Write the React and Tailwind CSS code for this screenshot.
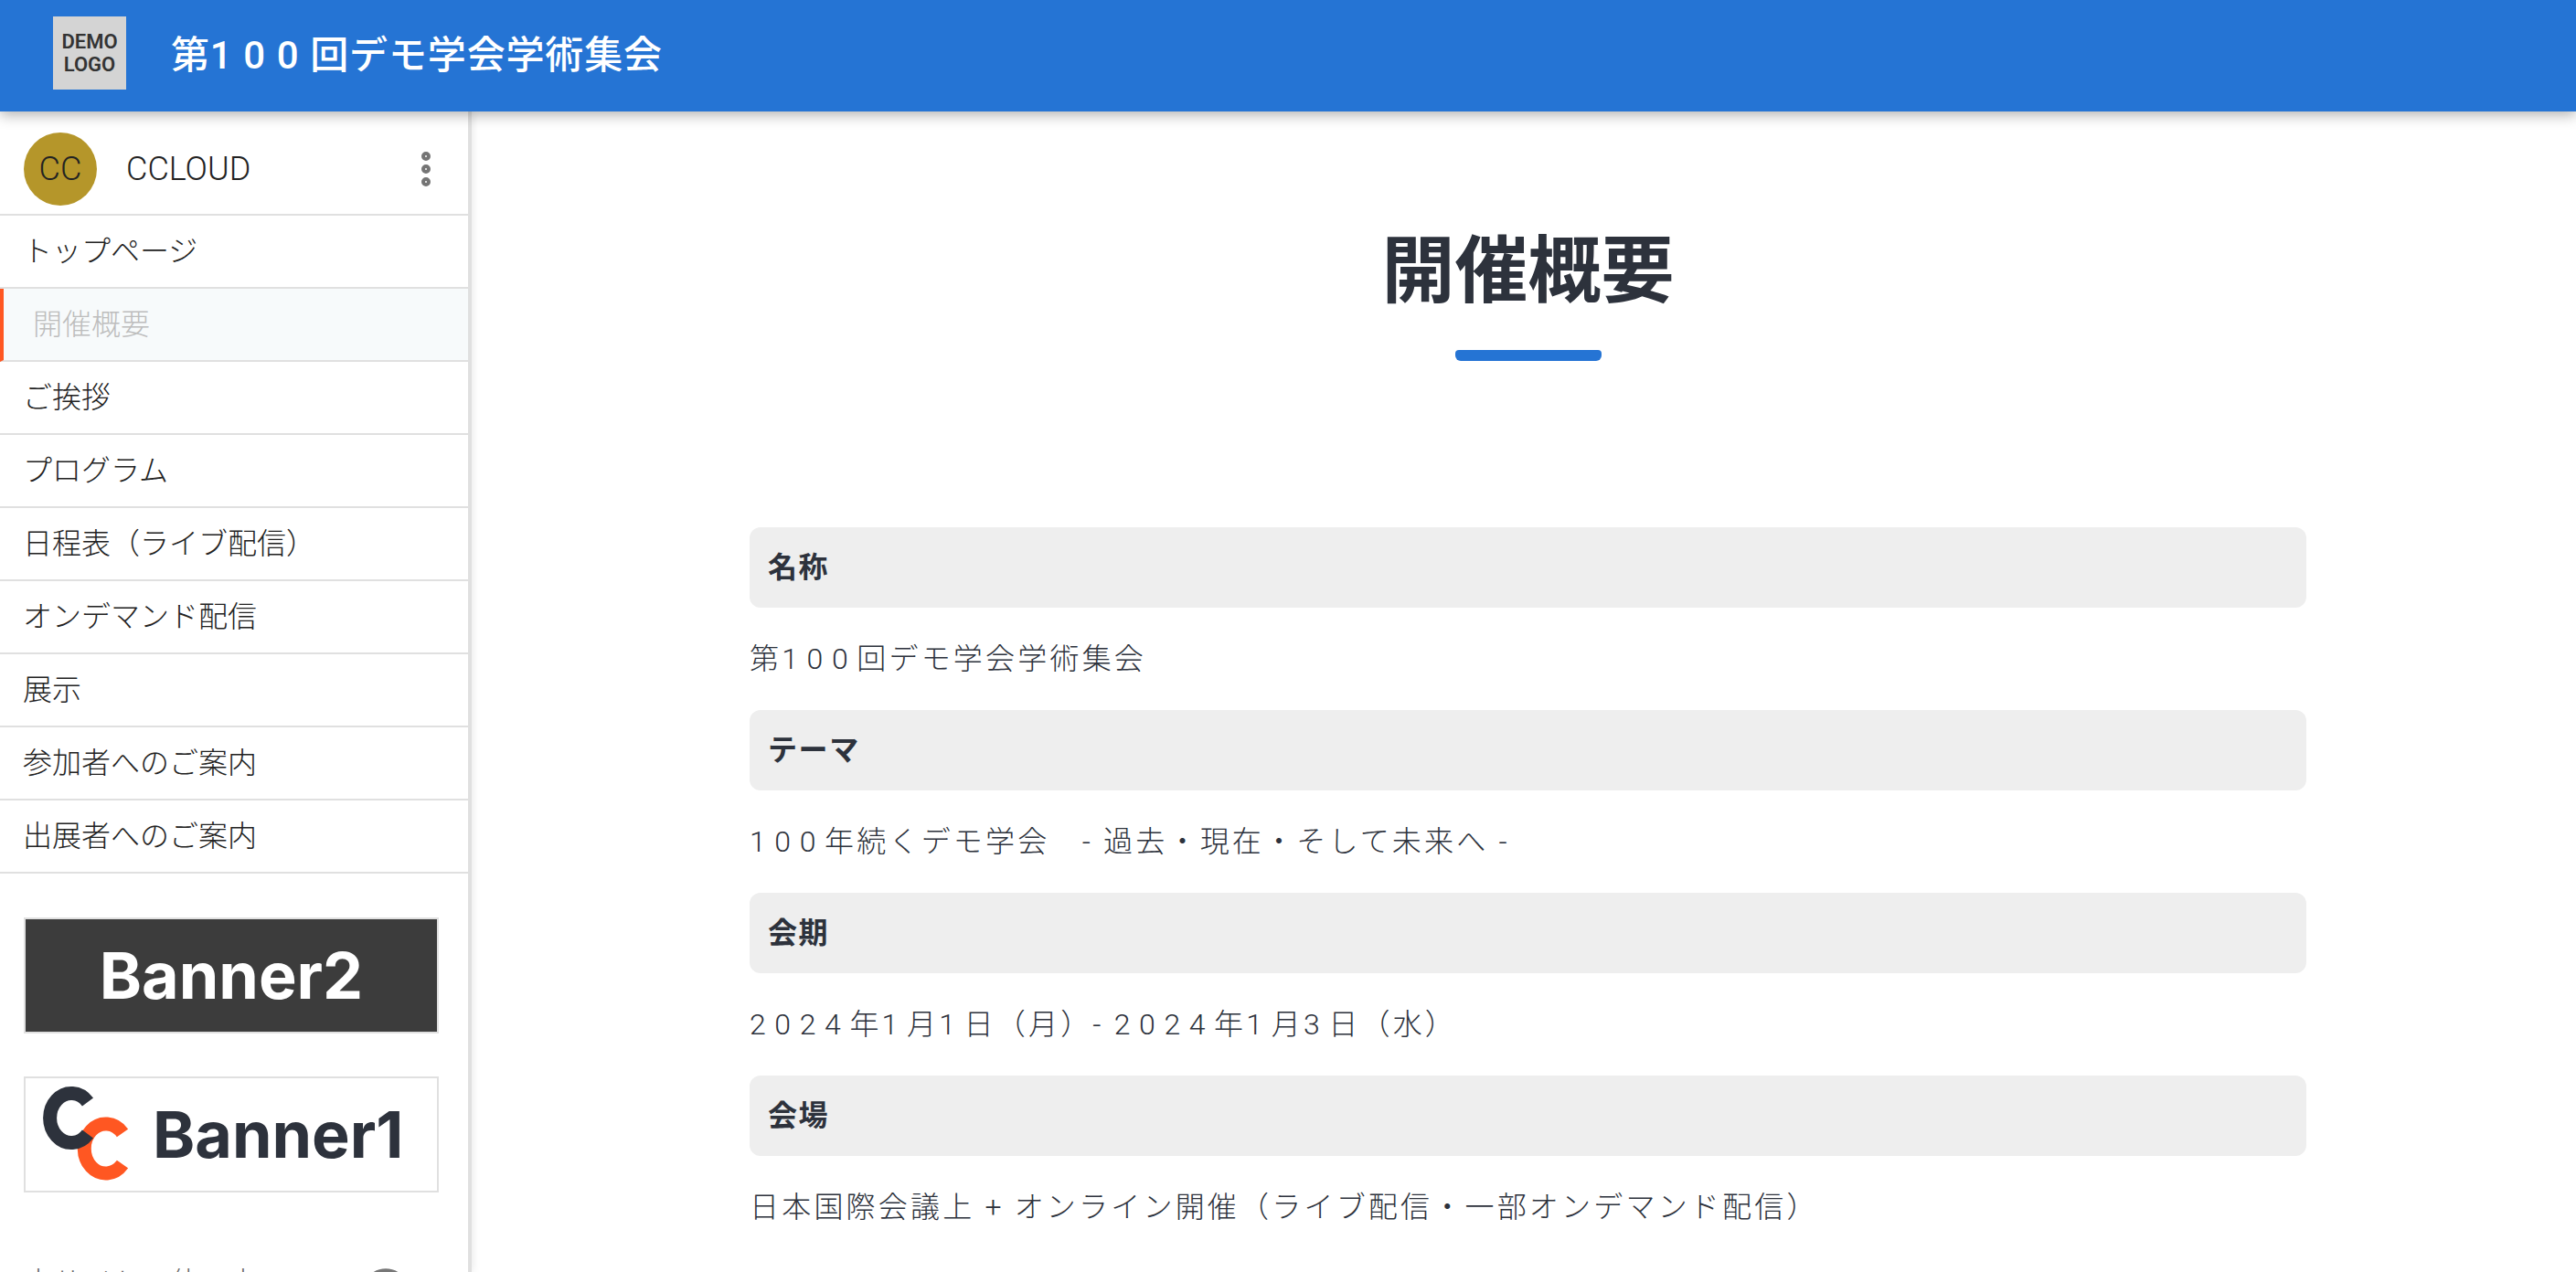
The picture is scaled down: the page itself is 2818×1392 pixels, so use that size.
import { MoreVertical, CircleHelp } from "lucide-react";

const menu = [
  "トップページ",
  "開催概要",
  "ご挨拶",
  "プログラム",
  "日程表（ライブ配信）",
  "オンデマンド配信",
  "展示",
  "参加者へのご案内",
  "出展者へのご案内",
];

const overview = [
  ["名称", "第100回デモ学会学術集会"],
  ["テーマ", "100年続くデモ学会　- 過去・現在・そして未来へ -"],
  ["会期", "2024年1月1日（月）- 2024年1月3日（水）"],
  ["会場", "日本国際会議上 + オンライン開催（ライブ配信・一部オンデマンド配信）"],
];

// digits sit wider apart than the kana around them
function Spaced({ text }) {
  return text.split(/(\d+)/).map((part, i) =>
    /\d/.test(part) ? (
      <span key={i} className="tracking-[0.3em]">
        {part}
      </span>
    ) : (
      part
    )
  );
}

function CcLogo() {
  return (
    <svg width="112" height="123" viewBox="0 0 112 123" className="shrink-0">
      <path d="M106 60 A23.5 27 0 1 0 106 94" fill="none" stroke="#ff5722" strokeWidth="15" />
      <path d="M68 26 A23.5 27 0 1 0 68 61" fill="none" stroke="#2d323c" strokeWidth="15" />
    </svg>
  );
}

export default function App() {
  return (
    <div className="h-[1392px] overflow-hidden flex flex-col bg-white font-['Roboto','Noto_Sans_CJK_JP',sans-serif]">
      {/* HEADER */}
      <header className="relative z-20 h-[122px] shrink-0 flex items-center bg-[#2574d4] pl-[58px] shadow-[0_4px_14px_rgba(0,0,0,0.3)]">
        <div className="w-20 h-20 -mt-[6px] bg-[#d4d4d4] flex items-center justify-center text-center text-[22px] leading-[25px] font-semibold text-[#333]">
          DEMO
          <br />
          LOGO
        </div>
        <h1 className="ml-[49px] mb-[2px] text-[42px] font-medium text-white tracking-[0.02em]">
          <Spaced text="第100回デモ学会学術集会" />
        </h1>
      </header>

      <div className="flex flex-1 min-h-0">
        {/* SIDEBAR */}
        <aside className="relative z-10 w-[516px] shrink-0 border-r-4 border-[#e0e0e0] shadow-[2px_0_8px_rgba(0,0,0,0.08)] overflow-hidden font-light">
          <div className="h-[114px] flex items-center pt-[14px] pl-[26px] pr-[22px] border-b-2 border-[#e0e0e0]">
            <div className="w-20 h-20 rounded-full bg-[#b5962a] flex items-center justify-center text-[36px] text-[#222]">
              CC
            </div>
            <span className="ml-[32px] flex-1 text-[36px] text-[#222]">CCLOUD</span>
            <MoreVertical size={48} strokeWidth={3} className="text-[#757575]" />
          </div>

          {menu.map((item) =>
            item === "開催概要" ? (
              <div
                key={item}
                className="h-20 flex items-center pl-[32px] border-l-4 border-l-[#ff5722] border-b-2 border-b-[#e0e0e0] bg-[#f7fafb] text-[32px] text-[#bdbdbd]"
              >
                {item}
              </div>
            ) : (
              <div
                key={item}
                className="h-20 flex items-center pl-[25px] border-b-2 border-[#e0e0e0] text-[32px] text-[#222]"
              >
                {item}
              </div>
            )
          )}

          <div className="pt-[48px] pl-[26px] flex flex-col gap-[47px]">
            <div className="w-[454px] h-[127px] border-2 border-[#e0e0e0] bg-[#3c3c3c] flex items-center justify-center text-[70px] font-bold text-white font-['Inter',sans-serif]">
              Banner2
            </div>
            <div className="w-[454px] h-[127px] border-2 border-[#e0e0e0] bg-white flex items-center text-[70px] font-bold text-[#2d323c] font-['Inter',sans-serif]">
              <CcLogo />
              <span className="ml-[27px]">Banner1</span>
            </div>
          </div>

          <div className="mt-[75px] ml-[26px] w-[424px] flex justify-between text-[32px] leading-[48px] text-[#666]">
            <span>本サイトの使い方</span>
            <CircleHelp size={56} strokeWidth={2} className="mt-[6px] text-[#777]" />
          </div>
        </aside>

        {/* MAIN */}
        <main className="flex-1 min-w-0 pl-[304px] pr-[295px] text-[#2d323c]">
          <h2 className="mt-[117px] text-center text-[80px] leading-[116px] font-bold">開催概要</h2>
          <div className="mx-auto mt-[28px] w-40 h-3 rounded-b-md rounded-t-sm bg-[#2574d4]" />

          <div className="mt-[182px]">
            {overview.map(([label, value]) => (
              <div key={label}>
                <div className="h-[88px] flex items-center px-5 rounded-xl bg-[#eeeeee] text-[32px] font-bold tracking-[0.05em]">
                  {label}
                </div>
                <p className="h-[112px] flex items-center whitespace-pre-wrap font-light text-[32px] tracking-[0.1em]">
                  <span>
                    <Spaced text={value} />
                  </span>
                </p>
              </div>
            ))}
          </div>
        </main>
      </div>
    </div>
  );
}
